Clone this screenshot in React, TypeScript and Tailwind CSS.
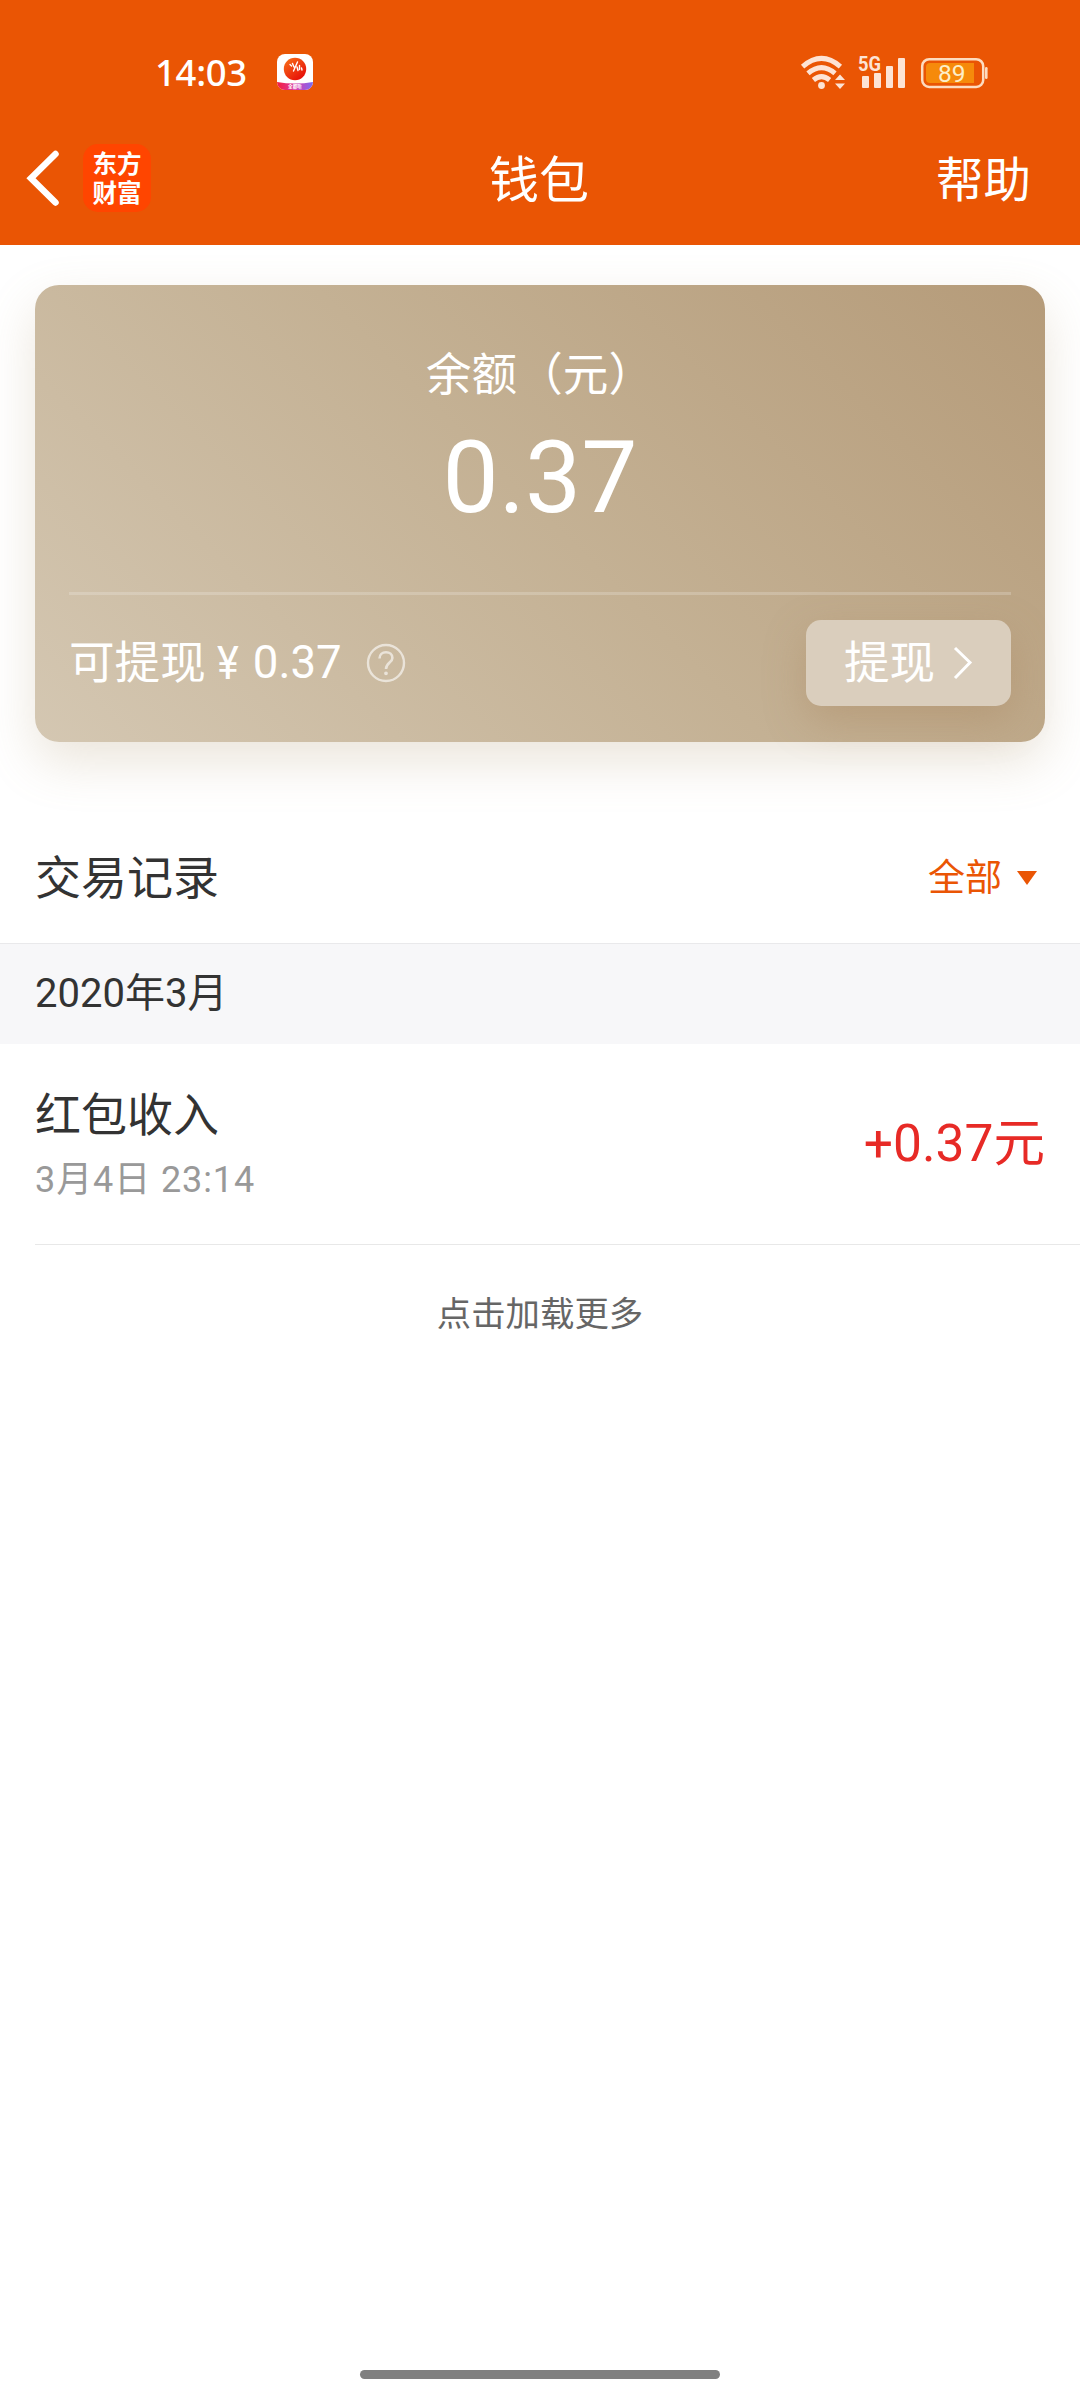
import React from "react";

const CJK = "font-[Roboto,'Noto_Sans_CJK_SC',sans-serif]";

function StatusBar() {
  return (
    <div className="flex h-[95px] items-end pl-[155px] pr-[92px]">
      <div className="flex h-[46px] w-full items-center">
        <span className="w-[122px] font-['Noto_Sans',sans-serif] text-[36.5px] font-medium leading-[46px] tracking-[-0.3px] text-white">
          14:03
        </span>
        <svg className="h-9 w-9" viewBox="0 0 36 36">
          <defs>
            <linearGradient id="ball" x1="0" y1="0" x2="0.8" y2="1">
              <stop offset="0" stopColor="#f9741a" />
              <stop offset="1" stopColor="#e60a08" />
            </linearGradient>
            <linearGradient id="ribbon" x1="0" y1="0" x2="1" y2="0">
              <stop offset="0" stopColor="#f5203c" />
              <stop offset="0.55" stopColor="#d63fb0" />
              <stop offset="1" stopColor="#7a6cf5" />
            </linearGradient>
            <clipPath id="tile">
              <rect width="36" height="36" rx="8" />
            </clipPath>
          </defs>
          <g clipPath="url(#tile)">
            <rect width="36" height="36" fill="#fff" />
            <path d="M0 28 Q18 31 36 28 V36 H0Z" fill="url(#ribbon)" />
            <circle cx="18" cy="15" r="11.2" fill="url(#ball)" />
            <path
              d="M13 10.5 L14.5 12 M15.5 9.5 L17 13 M20.5 8 L16.5 17 M20 13 L21 16.5 M22.5 11.5 L22.5 15.5 M24.5 14 L25 16"
              stroke="#fff"
              strokeWidth="1.4"
              strokeLinecap="round"
            />
            <text x="18" y="34" textAnchor="middle" fontSize="4.6" fontWeight="700" fill="#fff" fontFamily="Noto Sans CJK SC, sans-serif">
              全都听
            </text>
          </g>
        </svg>
        <svg className="ml-auto h-[36px] w-[188px] overflow-visible" viewBox="800 53 188 36" fill="none">
          <g stroke="#fde3d5" strokeWidth="5">
            <path d="M802.6 65.6 Q821.5 49.2 840.4 65.6" />
            <path d="M808 72.4 Q821.5 60.8 835 72.4" />
            <path d="M813.4 79 Q821.5 72.4 829.6 79" />
          </g>
          <g fill="#fde3d5">
            <circle cx="821.5" cy="84.5" r="3.4" />
            <path d="M835 79 L840 73.5 L845 79Z M835 82.5 L840 88 L845 82.5Z" />
            <rect x="862" y="75" width="7" height="12" rx="1" />
            <rect x="874" y="72" width="7" height="15" rx="1" />
            <rect x="886" y="65" width="7" height="22" rx="1" />
            <rect x="898" y="57" width="7" height="30" rx="1" />
            <text x="858" y="70" fontSize="20.5" fontWeight="700" textLength="23" lengthAdjust="spacingAndGlyphs" fontFamily="Roboto, sans-serif">
              5G
            </text>
          </g>
          <rect x="922.2" y="58.2" width="61" height="27.8" rx="7" stroke="#fddcc0" strokeWidth="2.5" />
          <path d="M930 62 H974 V82 H930 Q926 82 926 78 V66 Q926 62 930 62Z" fill="#f68a0b" />
          <rect x="985" y="66" width="2.6" height="12" rx="1.3" fill="#fddcc0" />
          <text x="951.8" y="81" textAnchor="middle" fontSize="24.5" fontWeight="400" fill="#fdeec8" fontFamily="Roboto, sans-serif">
            89
          </text>
        </svg>
      </div>
    </div>
  );
}

function NavBar() {
  return (
    <div className="grid h-[150px] grid-cols-3 items-center pl-[25px] pr-[49px] text-white">
      <div className="flex items-center pt-[15px]">
        <svg className="h-[56px] w-[36px]" viewBox="0 0 36 56" fill="none">
          <path d="M30.5 4 L6 28.2 L30.5 52.5" stroke="#fff" strokeWidth="6.5" strokeLinecap="round" />
        </svg>
        <div className="ml-[22px] flex h-[68px] w-[68px] flex-col items-center justify-center rounded-[15px] bg-[#ff4500] pb-[2px] font-['Noto_Sans_CJK_SC',sans-serif] text-[24.5px] font-bold leading-[29px]">
          <span>东方</span>
          <span>财富</span>
        </div>
      </div>
      <h1 className="relative left-[11px] pt-[21px] text-center text-[50px] leading-[60px]">钱包</h1>
      <button className="pt-[22px] text-right text-[47.5px] leading-[60px]">帮助</button>
    </div>
  );
}

function BalanceCard() {
  return (
    <section className="mx-[35px] mt-10 flex h-[457px] flex-col rounded-[24px] bg-[linear-gradient(45deg,#d4c7b2_0%,#c4b194_50%,#b59b79_100%)] px-[34px] text-white shadow-[0_20px_50px_rgba(170,145,105,0.24)]">
      <p className="mt-[61px] text-center text-[45.6px] leading-[60px]">余额（元）</p>
      <p className="mt-[17px] text-center text-[100px] leading-[110px]">0.37</p>
      <div className="mt-[59px] h-[3px] bg-white/20" />
      <div className="mt-[25px] flex h-[86px] items-center">
        <span className="pt-[2px] text-[45.6px] leading-[60px]">可提现</span>
        <span className="ml-[11px] w-[25px] text-[46px] leading-[60px]">
          <span className="inline-block origin-left scale-x-[0.9]">¥</span>
        </span>
        <span className="ml-[11px] text-[45.6px] leading-[60px]">0.37</span>
        <svg className="ml-[24px] h-10 w-10" viewBox="0 0 40 40" fill="none" stroke="#fff" strokeOpacity="0.6">
          <circle cx="20" cy="20" r="18" strokeWidth="2.4" />
          <path d="M13.5 15.5 C13.5 11.5 16.3 9.3 20 9.3 C23.7 9.3 26.4 11.5 26.4 14.9 C26.4 19.5 20 19.7 20 26" strokeWidth="2.6" />
          <circle cx="20" cy="30.3" r="1" strokeWidth="1.8" />
        </svg>
        <button className="ml-auto flex h-[86px] w-[205px] items-center rounded-[15px] bg-[#dacebd] pl-[38px] shadow-[0_15px_40px_rgba(165,130,90,0.35)]">
          <span className="pt-[2px] text-[45.6px] leading-[60px]">提现</span>
          <svg className="ml-[17px] h-[34px] w-[24px]" viewBox="0 0 24 34" fill="none">
            <path d="M3 2 L18 16.5 L3 32" stroke="#fff" strokeWidth="3" />
          </svg>
        </button>
      </div>
    </section>
  );
}

function Records() {
  return (
    <section className="text-[#333]">
      <div className="mt-[71px] flex h-[130px] items-center pl-[35px] pr-[43px]">
        <h2 className="text-[46px] leading-[60px]">交易记录</h2>
        <button className="ml-auto flex items-center text-[#ea5504]">
          <span className="pt-[2px] text-[37px] leading-[60px]">全部</span>
          <svg className="ml-[15px] h-[14px] w-5" viewBox="0 0 20 14">
            <path d="M0 0 H20 L10 14Z" fill="#ea5504" />
          </svg>
        </button>
      </div>
      <div className="flex h-[101px] items-center border-t border-[#e9e9eb] bg-[#f7f7f9] pl-[35px] text-[40px] leading-[60px]">
        2020年3月
      </div>
      <div className="ml-[35px] flex h-[201px] items-center border-b border-[#e8e8e8] pr-[35px]">
        <div className="pt-[8px]">
          <p className="text-[46px] leading-[64px]">红包收入</p>
          <p className="text-[36px] leading-[66px] tracking-[0.9px] text-[#999]">3月4日 23:14</p>
        </div>
        <span className="ml-auto text-[51.5px] leading-[60px] text-[#e72a26]">+0.37元</span>
      </div>
      <button className="mx-auto mt-[39px] block text-[34.4px] leading-[60px] text-[#666]">点击加载更多</button>
    </section>
  );
}

export default function App() {
  return (
    <main className={`${CJK} flex h-[2400px] w-[1080px] flex-col overflow-hidden bg-white`}>
      <header className="h-[245px] bg-[#ea5504]">
        <StatusBar />
        <NavBar />
      </header>
      <BalanceCard />
      <Records />
      <div className="mx-auto mb-[21px] mt-auto h-[9px] w-[360px] rounded-full bg-[#808080]" />
    </main>
  );
}
